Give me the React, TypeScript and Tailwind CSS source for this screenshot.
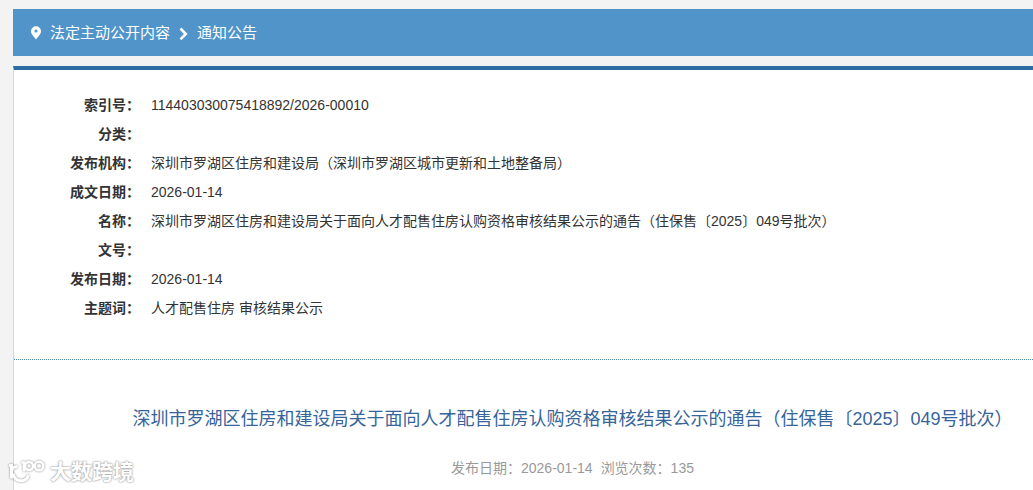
const rows: { label: string; value: string }[] = [
  { label: "索引号：", value: "114403030075418892/2026-00010" },
  { label: "分类：", value: "" },
  { label: "发布机构：", value: "深圳市罗湖区住房和建设局（深圳市罗湖区城市更新和土地整备局）" },
  { label: "成文日期：", value: "2026-01-14" },
  {
    label: "名称：",
    value: "深圳市罗湖区住房和建设局关于面向人才配售住房认购资格审核结果公示的通告（住保售〔2025〕049号批次）",
  },
  { label: "文号：", value: "" },
  { label: "发布日期：", value: "2026-01-14" },
  { label: "主题词：", value: "人才配售住房 审核结果公示" },
];

function Breadcrumb() {
  return (
    <nav aria-label="当前位置" className="flex h-[47px] items-center bg-[#5194c9] pl-[17px] text-[15px] leading-6 text-white">
      <svg aria-hidden="true" viewBox="0 0 12 14" className="mr-2 h-[14px] w-3" fill="currentColor">
        <path fillRule="evenodd" d="M6 0.2a5 5 0 0 0-5 5C1 8.500 4.200 10.800 6 13.500 7.800 10.800 11 8.500 11 5.200A5 5 0 0 0 6 .2ZM6 3.400a1.500 1.500 0 1 1 0 3 1.500 1.500 0 0 1 0-3Z" />
      </svg>
      <a href="#public">法定主动公开内容</a>
      <svg aria-hidden="true" viewBox="0 0 10 14" className="mx-2 h-[14px] w-[11px]" fill="none" stroke="currentColor" strokeWidth="2.6">
        <path d="M2 2.500 7.300 8 2 13.300" />
      </svg>
      <a href="#notice">通知公告</a>
    </nav>
  );
}

function Watermark() {
  return (
    <div className="absolute bottom-1 left-2 flex items-center gap-1 text-white">
      <svg
        aria-hidden="true"
        viewBox="0 0 38 28"
        className="h-7 w-[38px] overflow-visible drop-shadow-[0_0_1px_#888888]"
        fill="none"
        stroke="currentColor"
        strokeWidth="3"
      >
        <path d="M1 7.500h2.500v13M3.500 14c0-3 2-5.500 6-5.500M5 15.500c2 9.500 13 9.500 15.500 1.500" />
        <path d="M13.500 4.500h2.500v9" strokeWidth="2.500" />
        <circle cx="21" cy="8" r="4" strokeWidth="2.500" />
        <circle cx="31" cy="8" r="4.300" strokeWidth="2.500" />
      </svg>
      <span className="text-[21px] leading-7 font-bold [text-shadow:0_0_2px_#999999,0_0_2px_#aaaaaa]">大数跨境</span>
    </div>
  );
}

export default function App() {
  return (
    <div className="relative flex min-h-screen flex-col bg-[#f3f3f3] pt-[9px] pl-[13px] font-['Liberation_Sans','Noto_Sans_CJK_SC',sans-serif]">
      <Breadcrumb />
      <main className="mt-[10px] grow border-t-4 border-l border-t-[#2e6ca4] border-l-[#d5d9dc] bg-white">
        <dl className="border-b border-dotted border-[#4f87a8] pt-[21px] pb-9 text-[14px] leading-[29px] text-[#333333]">
          {rows.map((row) => (
            <div key={row.label} className="flex min-h-[29px]">
              <dt className="w-[126px] shrink-0 text-right font-bold">{row.label}</dt>
              <dd className="pl-[11px]">{row.value}</dd>
            </div>
          ))}
        </dl>
        <article className="pt-11 pr-4 pl-[114px] text-center">
          <h1 className="text-[18px] leading-[30px] whitespace-nowrap text-[#36659b]">
            深圳市罗湖区住房和建设局关于面向人才配售住房认购资格审核结果公示的通告（住保售〔2025〕049号批次）
          </h1>
          <p className="mt-[22px] text-[14px] leading-6 text-[#999999]">
            <span className="mr-2">发布日期：2026-01-14</span>
            <span>浏览次数：135</span>
          </p>
        </article>
      </main>
      <Watermark />
    </div>
  );
}
